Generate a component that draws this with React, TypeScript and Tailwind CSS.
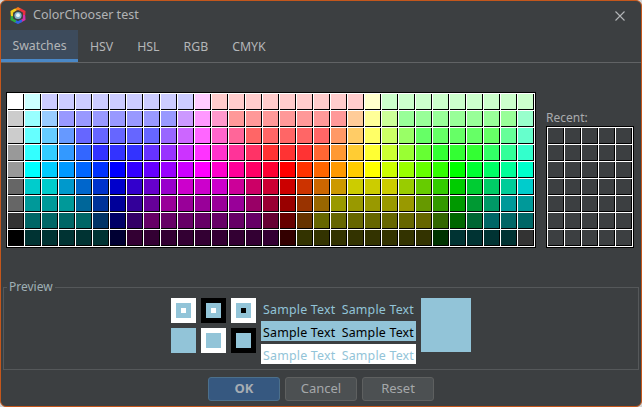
// 31 x 9 swatch palette, short hex, "xxx*n" means repeated n times
const swatchRows = [
  "fff cff ccf*9 fcf fcc*9 ffc cfc*9",
  "ccc 9ff 9cf 99f*7 c9f f9f f9c f99*7 fc9 ff9 cf9 9f9*7 9fc",
  "ccc 6ff 6cf 69f 66f*5 96f c6f f6f f6c f69 f66*5 f96 fc6 ff6 cf6 9f6 6f6*5 6f9 6fc",
  "999 3ff 3cf 39f 36f 33f*3 63f 93f c3f f3f f3c f39 f36 f33*3 f63 f93 fc3 ff3 cf3 9f3 6f3 3f3*3 3f6 3f9 3fc",
  "999 0ff 0cf 09f 06f 03f 00f 30f 60f 90f c0f f0f f0c f09 f06 f03 f00 f30 f60 f90 fc0 ff0 cf0 9f0 6f0 3f0 0f0 0f3 0f6 0f9 0fc",
  "666 0cc*2 09c 06c 03c 00c 30c 60c 90c c0c*3 c09 c06 c03 c00 c30 c60 c90 cc0*3 9c0 6c0 3c0 0c0 0c3 0c6 0c9 0cc",
  "666 099*3 069 039 009 309 609 909*5 906 903 900 930 960 990*5 690 390 090 093 096 099*2",
  "333 066*4 036 006 306 606*7 603 600 630 660*7 360 060 063 066*3",
  "000 033*5 003 303*9 300 330*8 030 033*4 333",
];

const swatches = swatchRows.flatMap((row) =>
  row.split(" ").flatMap((part) => {
    const [hex, count] = part.split("*");
    return Array<string>(Number(count ?? 1)).fill("#" + hex);
  })
);

function Cell({ color }: { color?: string }) {
  return (
    <div
      className="h-4 w-4 border-r border-b border-black"
      style={{ backgroundColor: color ?? "#3c3f41" }}
    />
  );
}

function Logo() {
  return (
    <svg width="16" height="17" viewBox="0 0 16 17" fill="none" strokeWidth="2.6" strokeLinecap="round">
      <path d="M5.2 3.2 L8 1.6 L10.8 3.2" stroke="#f07a1a" />
      <path d="M10.8 2.8 L14.2 4.8 L14 8" stroke="#ec2f3f" />
      <path d="M14 9 L14.2 12.2 L11.2 14" stroke="#d42fa8" />
      <path d="M11 14 L8 15.6 L5 14" stroke="#2f62e0" />
      <path d="M4.8 14 L1.8 12.2 L2 9" stroke="#2fae3a" />
      <path d="M2 8 L1.8 4.8 L5 3" stroke="#f0cf1e" />
      <circle cx="8" cy="8.5" r="5" fill="#3c3f41" stroke="none" />
      <circle cx="8" cy="8.5" r="3.6" fill="#7fb2cc" stroke="none" />
      <circle cx="8" cy="8.2" r="1.9" fill="#e8f3f8" stroke="none" />
    </svg>
  );
}

function Nested({ outer, inner }: { outer: string; inner?: string }) {
  return (
    <div className={`flex h-[25px] w-[25px] items-center justify-center ${outer}`}>
      <div className="flex h-[15px] w-[15px] items-center justify-center bg-[#92c4d8]">
        {inner && <div className={`h-[5px] w-[5px] ${inner}`} />}
      </div>
    </div>
  );
}

function SampleLine({ className }: { className: string }) {
  return (
    <div className={`flex h-5 w-[155px] items-center justify-between px-[2px] pt-[4px] text-[12.4px] tracking-[0.2px] ${className}`}>
      <span>Sample Text</span>
      <span>Sample Text</span>
    </div>
  );
}

function Button({ label, primary }: { label: string; primary?: boolean }) {
  return (
    <button
      className={
        primary
          ? "h-6 w-[72px] rounded-[3px] border border-[#4c708c] bg-[#365880] text-[13px] font-bold text-[#a7adb3]"
          : "h-6 w-[72px] rounded-[3px] border border-[#5e6060] bg-[#4c5052] text-[13px] text-[#a5a8aa]"
      }
    >
      {label}
    </button>
  );
}

export default function App() {
  const tabs = ["HSV", "HSL", "RGB", "CMYK"];
  return (
    <div className="h-[407px] w-[642px] overflow-hidden bg-[#d4d4d4] font-['Noto_Sans',sans-serif]">
      <div className="flex h-full flex-col rounded-[6px] border border-[#c4571c] bg-[#3c3f41] text-[#b4b6b8]">
        {/* title bar */}
        <div className="flex h-[29px] shrink-0 items-center pr-[16px] pl-[9px]">
          <Logo />
          <span className="ml-[7px] text-[12.5px] text-[#b1b3b5]">ColorChooser test</span>
          <svg className="ml-auto" width="10" height="10" viewBox="0 0 10 10">
            <path d="M0.5 0.5 L9.5 9.5 M9.5 0.5 L0.5 9.5" stroke="#b4b6b8" strokeWidth="1.1" fill="none" />
          </svg>
        </div>

        {/* tabs */}
        <div className="flex h-[33px] shrink-0 border-b border-[#616365] text-[12.3px]">
          <div className="flex w-[77px] items-center justify-center border-b-[3px] border-[#4a88c7] bg-[#3d4b5c] pt-[4px]">
            Swatches
          </div>
          {tabs.map((tab) => (
            <div key={tab} className="flex items-center px-3 pt-[3px]">
              {tab}
            </div>
          ))}
        </div>

        {/* palette + recent */}
        <div className="mt-[29px] ml-[5px] flex items-end gap-[10px]">
          <div className="grid grid-cols-[repeat(31,16px)] gap-px border border-black bg-white p-px">
            {swatches.map((color, i) => (
              <Cell key={i} color={color} />
            ))}
          </div>
          <div className="flex flex-col">
            <span className="text-[12px] leading-4 text-[#a9abad]">Recent:</span>
            <div className="grid grid-cols-[repeat(5,16px)] gap-px border border-black bg-white p-px">
              {Array.from({ length: 35 }).map((_, i) => (
                <Cell key={i} />
              ))}
            </div>
          </div>
        </div>

        {/* preview */}
        <fieldset className="mx-[2px] mt-[31px] h-[91px] shrink-0 border border-[#55585a] px-[2px] pb-0">
          <legend className="ml-px px-[2px] text-[12px] leading-4 text-[#9fb0b5]">Preview</legend>
          <div className="flex justify-center pt-[3px]">
            <div className="grid grid-cols-[repeat(3,25px)] grid-rows-[repeat(2,25px)] gap-[5px]">
              <Nested outer="bg-white" inner="bg-white" />
              <Nested outer="bg-black" inner="bg-white" />
              <Nested outer="bg-white" inner="bg-black" />
              <div className="bg-[#92c4d8]" />
              <Nested outer="bg-white" />
              <Nested outer="bg-black" />
            </div>
            <div className="ml-[5px] flex flex-col gap-[3px]">
              <SampleLine className="text-[#92c4d8]" />
              <SampleLine className="bg-[#92c4d8] text-black" />
              <SampleLine className="bg-white text-[#92c4d8]" />
            </div>
            <div className="ml-[5px] h-[54px] w-[50px] bg-[#92c4d8]" />
          </div>
        </fieldset>

        {/* buttons */}
        <div className="mt-[7px] flex justify-center gap-[5px]">
          <Button label="OK" primary />
          <Button label="Cancel" />
          <Button label="Reset" />
        </div>
      </div>
    </div>
  );
}
